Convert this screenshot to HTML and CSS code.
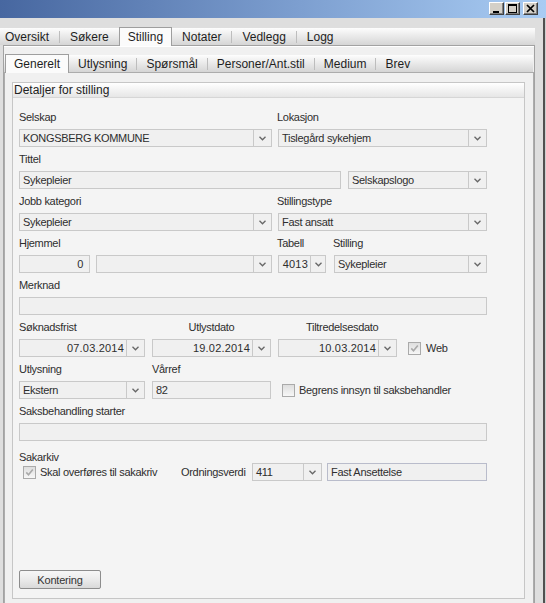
FILE: index.html
```html
<!DOCTYPE html>
<html lang="no">
<head>
<meta charset="utf-8">
<title>Stilling</title>
<link rel="stylesheet" href="styles.css">
</head>
<body>
<div class="titlebar">
  <div class="wbtns">
    <span class="wbtn"><svg width="13" height="11" viewBox="0 0 13 11"><rect x="3" y="8" width="6" height="2" fill="#000"/></svg></span>
    <span class="wbtn"><svg width="13" height="11" viewBox="0 0 13 11"><rect x="2.5" y="1.5" width="8" height="8" fill="none" stroke="#000"/><rect x="2" y="1" width="9" height="2" fill="#000"/></svg></span>
    <span class="wbtn wclose"><svg width="13" height="11" viewBox="0 0 13 11"><path d="M3 2 L10 9 M10 2 L3 9" stroke="#000" stroke-width="1.7"/></svg></span>
  </div>
</div>
<div class="frame">
  <div class="tabstrip outer-strip">
    <span class="tab first">Oversikt</span><span class="sep"></span>
    <span class="tab">Søkere</span>
    <span class="tab active">Stilling</span>
    <span class="tab">Notater</span><span class="sep"></span>
    <span class="tab">Vedlegg</span><span class="sep"></span>
    <span class="tab">Logg</span>
  </div>
  <div class="outer-panel">
    <div class="tabstrip inner-strip">
      <span class="tab active first-active">Generelt</span>
      <span class="tab">Utlysning</span><span class="sep"></span>
      <span class="tab">Spørsmål</span><span class="sep"></span>
      <span class="tab">Personer/Ant.stil</span><span class="sep"></span>
      <span class="tab">Medium</span><span class="sep"></span>
      <span class="tab">Brev</span>
    </div>
    <div class="inner-panel">
      <div class="group">
        <div class="group-head">Detaljer for stilling</div>
        <div class="group-body">

          <div class="row">
            <span class="lbl w258">Selskap</span><span class="lbl">Lokasjon</span>
          </div>
          <div class="row ctl">
            <div class="combo w253"><span class="val">KONGSBERG KOMMUNE</span><span class="dd"><svg width="7" height="5" viewBox="0 0 7 5"><polyline points="0.5,0.8 3.5,3.8 6.5,0.8" fill="none" stroke="#666" stroke-width="1.3"/></svg></span></div>
            <div class="combo w209 ml6"><span class="val">Tislegård sykehjem</span><span class="dd"><svg width="7" height="5" viewBox="0 0 7 5"><polyline points="0.5,0.8 3.5,3.8 6.5,0.8" fill="none" stroke="#666" stroke-width="1.3"/></svg></span></div>
          </div>

          <div class="row">
            <span class="lbl">Tittel</span>
          </div>
          <div class="row ctl">
            <div class="input w322"><span class="val">Sykepleier</span></div>
            <div class="combo w139 ml7"><span class="val">Selskapslogo</span><span class="dd"><svg width="7" height="5" viewBox="0 0 7 5"><polyline points="0.5,0.8 3.5,3.8 6.5,0.8" fill="none" stroke="#666" stroke-width="1.3"/></svg></span></div>
          </div>

          <div class="row">
            <span class="lbl w258">Jobb kategori</span><span class="lbl">Stillingstype</span>
          </div>
          <div class="row ctl">
            <div class="combo w253"><span class="val">Sykepleier</span><span class="dd"><svg width="7" height="5" viewBox="0 0 7 5"><polyline points="0.5,0.8 3.5,3.8 6.5,0.8" fill="none" stroke="#666" stroke-width="1.3"/></svg></span></div>
            <div class="combo w209 ml6"><span class="val">Fast ansatt</span><span class="dd"><svg width="7" height="5" viewBox="0 0 7 5"><polyline points="0.5,0.8 3.5,3.8 6.5,0.8" fill="none" stroke="#666" stroke-width="1.3"/></svg></span></div>
          </div>

          <div class="row">
            <span class="lbl w258">Hjemmel</span><span class="lbl w56">Tabell</span><span class="lbl">Stilling</span>
          </div>
          <div class="row ctl">
            <div class="input w71"><span class="val num">0</span></div>
            <div class="combo w176 ml6"><span class="val"></span><span class="dd"><svg width="7" height="5" viewBox="0 0 7 5"><polyline points="0.5,0.8 3.5,3.8 6.5,0.8" fill="none" stroke="#666" stroke-width="1.3"/></svg></span></div>
            <div class="combo w48 ml6"><span class="val date">4013</span><span class="dd narrow"><svg width="7" height="5" viewBox="0 0 7 5"><polyline points="0.5,0.8 3.5,3.8 6.5,0.8" fill="none" stroke="#666" stroke-width="1.3"/></svg></span></div>
            <div class="combo w153 ml8"><span class="val">Sykepleier</span><span class="dd"><svg width="7" height="5" viewBox="0 0 7 5"><polyline points="0.5,0.8 3.5,3.8 6.5,0.8" fill="none" stroke="#666" stroke-width="1.3"/></svg></span></div>
          </div>

          <div class="row">
            <span class="lbl">Merknad</span>
          </div>
          <div class="row ctl">
            <div class="input w468"><span class="val"></span></div>
          </div>

          <div class="row">
            <span class="lbl w133">Søknadsfrist</span><span class="lbl w119 center">Utlystdato</span><span class="lbl ml35">Tiltredelsesdato</span>
          </div>
          <div class="row ctl">
            <div class="combo w126"><span class="val date">07.03.2014</span><span class="dd"><svg width="7" height="5" viewBox="0 0 7 5"><polyline points="0.5,0.8 3.5,3.8 6.5,0.8" fill="none" stroke="#666" stroke-width="1.3"/></svg></span></div>
            <div class="combo w119 ml7"><span class="val date">19.02.2014</span><span class="dd"><svg width="7" height="5" viewBox="0 0 7 5"><polyline points="0.5,0.8 3.5,3.8 6.5,0.8" fill="none" stroke="#666" stroke-width="1.3"/></svg></span></div>
            <div class="combo w119 ml7"><span class="val date">10.03.2014</span><span class="dd"><svg width="7" height="5" viewBox="0 0 7 5"><polyline points="0.5,0.8 3.5,3.8 6.5,0.8" fill="none" stroke="#666" stroke-width="1.3"/></svg></span></div>
            <span class="chk checked ml11"><svg width="9" height="9" viewBox="0 0 9 9"><path d="M1.3 4.4 L3.5 6.8 L7.8 1.6" fill="none" stroke="#a9a9a9" stroke-width="1.6"/></svg></span>
            <span class="chk-text ml5">Web</span>
          </div>

          <div class="row">
            <span class="lbl w133">Utlysning</span><span class="lbl">Vårref</span>
          </div>
          <div class="row ctl">
            <div class="combo w126"><span class="val">Ekstern</span><span class="dd"><svg width="7" height="5" viewBox="0 0 7 5"><polyline points="0.5,0.8 3.5,3.8 6.5,0.8" fill="none" stroke="#666" stroke-width="1.3"/></svg></span></div>
            <div class="input w119 ml7"><span class="val">82</span></div>
            <span class="chk ml11"></span>
            <span class="chk-text ml4">Begrens innsyn til saksbehandler</span>
          </div>

          <div class="row">
            <span class="lbl">Saksbehandling starter</span>
          </div>
          <div class="row ctl">
            <div class="input w468"><span class="val"></span></div>
          </div>

          <div class="row">
            <span class="lbl group-lbl">Sakarkiv</span>
          </div>
          <div class="row ctl">
            <div class="cell w162">
              <span class="chk checked ml4"><svg width="9" height="9" viewBox="0 0 9 9"><path d="M1.3 4.4 L3.5 6.8 L7.8 1.6" fill="none" stroke="#a9a9a9" stroke-width="1.6"/></svg></span>
              <span class="chk-text ml4">Skal overføres til sakakriv</span>
            </div>
            <span class="chk-text w71">Ordningsverdi</span>
            <div class="combo w70"><span class="val">411</span><span class="dd"><svg width="7" height="5" viewBox="0 0 7 5"><polyline points="0.5,0.8 3.5,3.8 6.5,0.8" fill="none" stroke="#666" stroke-width="1.3"/></svg></span></div>
            <div class="input w160 ml5 blue"><span class="val">Fast Ansettelse</span></div>
          </div>

          <button class="push">Kontering</button>
        </div>
      </div>
    </div>
  </div>
</div>
</body>
</html>
```

FILE: styles.css
```css
* { box-sizing: border-box; }
html, body { margin: 0; padding: 0; }
body {
  width: 546px;
  height: 603px;
  overflow: hidden;
  background: #cfcfcf;
  font-family: "Liberation Sans", Arial, sans-serif;
  color: #333;
}

/* title bar */
.titlebar {
  height: 18px;
  background: linear-gradient(to right, #4767a0, #7d9fd0 55%, #a9ccf3);
  display: flex;
  justify-content: flex-end;
  padding: 2px 8px 0 0;
}
.wbtns { display: flex; }
.wbtn {
  width: 15px;
  height: 13px;
  background: #d4d0c8;
  border-top: 1px solid #fff;
  border-left: 1px solid #fff;
  border-right: 1px solid #404040;
  border-bottom: 1px solid #404040;
  box-shadow: inset -1px -1px 0 #808080;
  display: flex;
  align-items: center;
  justify-content: center;
  margin-left: 1px;
}
.wbtn.wclose { margin-left: 3px; }

/* frame */
.frame {
  width: 545px;
  height: 620px;
  background: #dedede;
  border-right: 2px solid #505050;
  padding-top: 10px;
}

/* tabs */
.tabstrip {
  display: flex;
  align-items: flex-start;
  height: 17px;
  background: linear-gradient(#fdfdfd, #d5d5d5);
}
.outer-strip { width: 535px; }
.inner-strip { width: 529px; }
.tab {
  font-size: 12px;
  line-height: 19px;
  height: 17px;
  padding: 0 10px;
  color: #1e1e1e;
  white-space: nowrap;
}
.inner-strip .tab { padding: 0 9px; }
.tab.first { padding-left: 5px; }
.sep {
  width: 1px;
  height: 12px;
  margin-top: 3px;
  background: #bdbdbd;
}
.tab.active,
.inner-strip .tab.active {
  position: relative;
  z-index: 2;
  height: 19px;
  margin-top: -1px;
  padding: 0 8px;
  background: #fbfbfb;
  border: 1px solid #9e9e9e;
  border-bottom: none;
}
.tab.first-active { margin-left: 1px; }

.outer-panel {
  margin-left: 3px;
  width: 532px;
  height: 600px;
  border: 1px solid #a2a2a2;
  background: #f0f0f0;
  box-shadow: inset 0 1px 0 #fff;
  padding: 9px 1px 0 0;
}
.inner-panel {
  width: 530px;
  height: 560px;
  border: 1px solid #acacac;
  background: #f0f0f0;
  padding: 9px 7px 0 7px;
}

/* group box */
.group {
  width: 513px;
  height: 517px;
  border: 1px solid #c6c6c6;
  background: #f4f4f4;
  display: flex;
  flex-direction: column;
}
.group-head {
  height: 15px;
  line-height: 15px;
  font-size: 12px;
  padding-left: 1px;
  color: #222;
  background: linear-gradient(#ffffff, #e6e6e6);
  border-bottom: 1px solid #d6d6d6;
}
.group-body {
  flex: 1;
  display: flex;
  flex-direction: column;
  padding: 7px 0 9px 6px;
}

.row { display: flex; align-items: center; }
.row.ctl { height: 18px; }

.lbl {
  height: 24px;
  line-height: 24px;
  font-size: 11px;
  letter-spacing: -0.3px;
  color: #2e2e2e;
  white-space: nowrap;
}
.lbl.center { text-align: center; }
.lbl.group-lbl {
  height: 22px;
  line-height: 12px;
  padding-top: 10px;
}

.combo, .input {
  display: flex;
  height: 18px;
  border: 1px solid #c9c9c9;
  background: #f0f0f0;
}
.input.blue { border-color: #b9bccb; }
.val {
  flex: 1;
  min-width: 0;
  padding-left: 3px;
  font-size: 11px;
  letter-spacing: -0.3px;
  line-height: 16px;
  color: #2e2e2e;
  white-space: nowrap;
  overflow: hidden;
}
.val.num { text-align: right; padding-right: 6px; }
.val.date { text-align: right; padding-right: 2px; letter-spacing: 0.2px; }
.dd {
  width: 18px;
  border-left: 1px solid #c9c9c9;
  display: flex;
  align-items: center;
  justify-content: center;
}
.dd.narrow { width: 15px; }

.chk {
  width: 13px;
  height: 13px;
  flex: none;
  border: 1px solid #aaaaaa;
  background: linear-gradient(#dedede, #f7f7f7);
  display: flex;
  align-items: center;
  justify-content: center;
}
.chk-text {
  font-size: 11px;
  letter-spacing: -0.3px;
  color: #2e2e2e;
  white-space: nowrap;
}
.cell { display: flex; align-items: center; }

.push {
  margin-top: auto;
  width: 82px;
  height: 19px;
  padding: 0;
  font-family: "Liberation Sans", Arial, sans-serif;
  font-size: 11px;
  letter-spacing: -0.2px;
  color: #333;
  border: 1px solid #8d8d8d;
  border-radius: 2px;
  background: linear-gradient(#f7f7f7, #ebebeb 50%, #d9d9d9);
}

/* widths */
.w48 { width: 48px; flex: none; }
.w56 { width: 56px; flex: none; }
.w70 { width: 70px; flex: none; }
.w71 { width: 71px; flex: none; }
.w119 { width: 119px; flex: none; }
.w126 { width: 126px; flex: none; }
.w133 { width: 133px; flex: none; }
.w139 { width: 139px; flex: none; }
.w153 { width: 153px; flex: none; }
.w160 { width: 160px; flex: none; }
.w162 { width: 162px; flex: none; }
.w176 { width: 176px; flex: none; }
.w209 { width: 209px; flex: none; }
.w253 { width: 253px; flex: none; }
.w258 { width: 258px; flex: none; }
.w322 { width: 322px; flex: none; }
.w468 { width: 468px; flex: none; }
.ml4 { margin-left: 4px; }
.ml5 { margin-left: 5px; }
.ml6 { margin-left: 6px; }
.ml7 { margin-left: 7px; }
.ml8 { margin-left: 8px; }
.ml11 { margin-left: 11px; }
.ml35 { margin-left: 35px; }
```
